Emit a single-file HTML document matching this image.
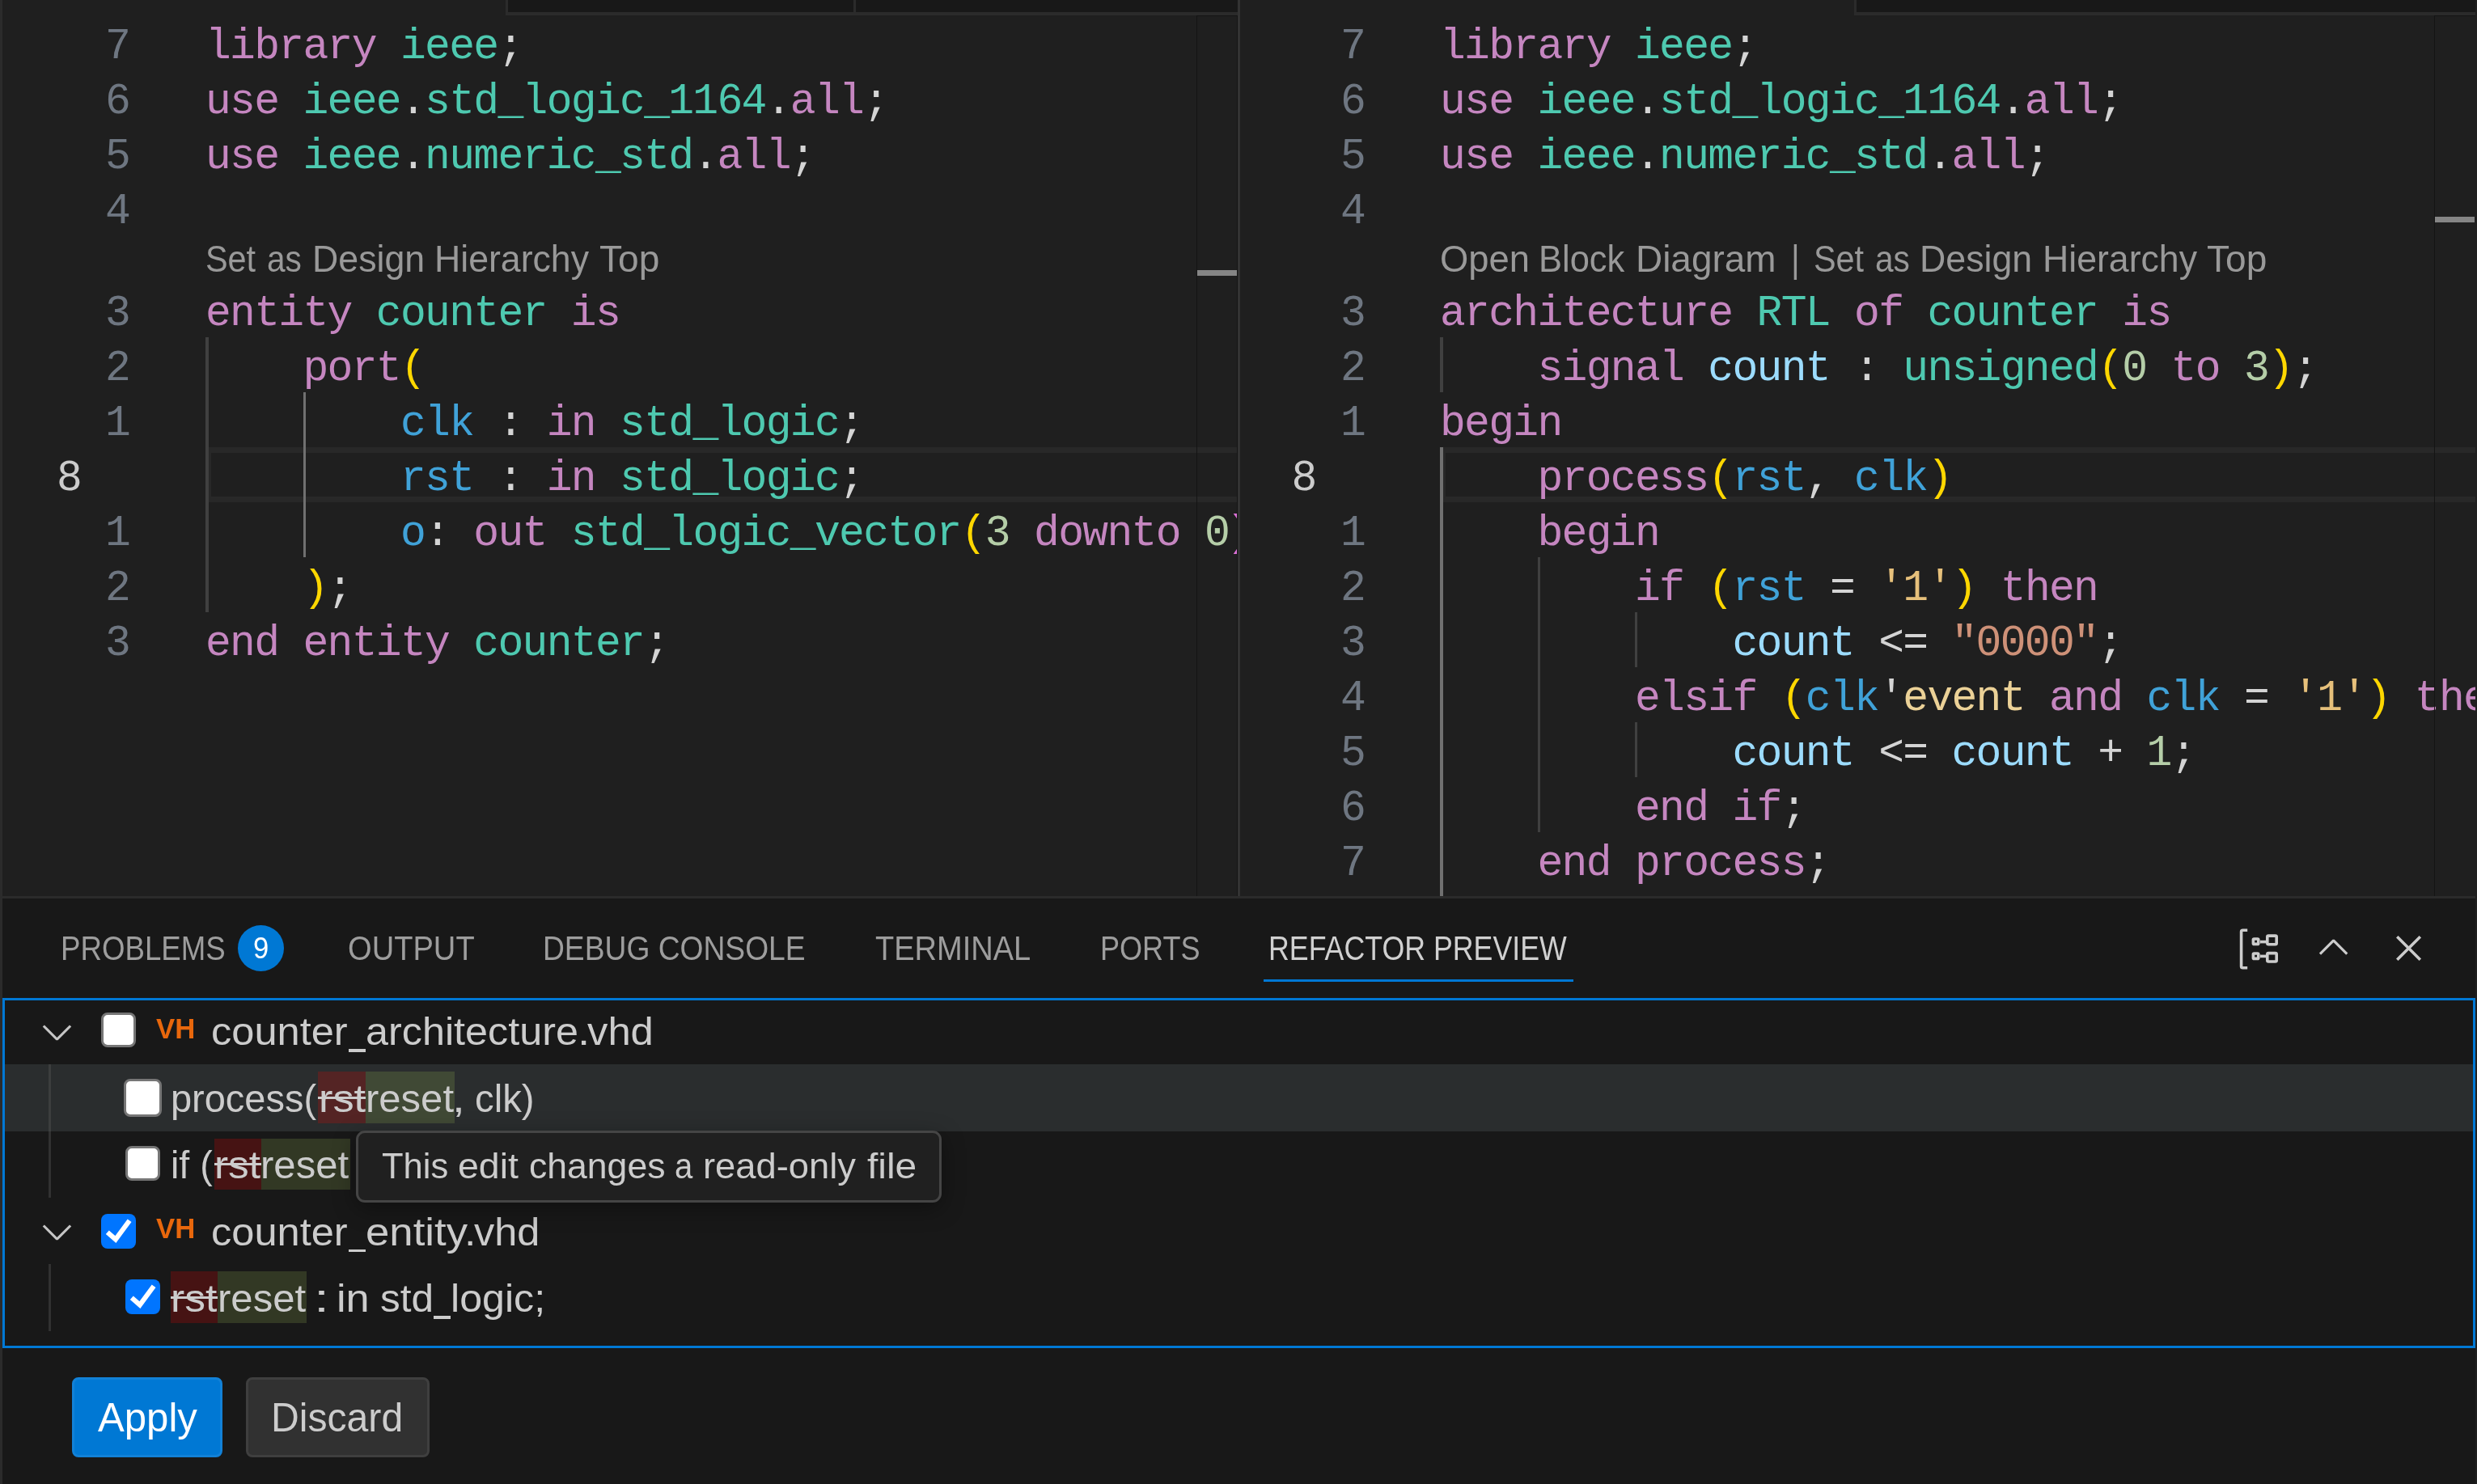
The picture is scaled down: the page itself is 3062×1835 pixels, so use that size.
<!DOCTYPE html>
<html><head><meta charset="utf-8"><title>VS Code - Refactor Preview</title>
<style>
*{box-sizing:border-box}
html,body{margin:0;padding:0}
body{width:3062px;height:1835px;background:#1f1f1f;overflow:hidden;position:relative;font-family:"Liberation Sans",sans-serif;color:#cccccc}
#root{position:absolute;left:0;top:0;width:3062px;height:1835px;overflow:hidden;will-change:transform}
.a{position:absolute}
.t{position:absolute;white-space:pre;line-height:1;transform-origin:0 50%;font-family:"Liberation Sans",sans-serif}
.ed{position:absolute;top:0;height:1108px;overflow:hidden}
.code{position:absolute;height:68px;line-height:78px;white-space:pre;font-family:"Liberation Mono",monospace;font-size:53px;letter-spacing:-1.6885px;color:#d4d4d4}
.ln{position:absolute;height:68px;line-height:78px;text-align:right;font-family:"Liberation Mono",monospace;font-size:53px;letter-spacing:-1.6885px;color:#6e7681}
.ln.cur{color:#cccccc}
.curline{position:absolute;height:68px;border:7px solid #282828;border-right:0}
.g{position:absolute;width:3.5px;background:#404040}
.g.ga{background:#707070}
.cb{position:absolute;background:#fff;border:3.3px solid #767676;border-radius:8px}
.cbc{position:absolute;background:#0075ff;border-radius:8px}
.red{position:absolute;background:rgba(255,0,0,0.2)}
.grn{position:absolute;background:rgba(155,185,85,0.2)}
.strike{position:absolute;height:3px;background:#cccccc}
.tg{position:absolute;width:3px;background:rgba(88,88,88,0.4)}

</style></head>
<body>
<div id="root">
<!-- editor area -->
<div class="a" style="left:0;top:0;width:3px;height:1835px;background:#2b2b2b"></div>

<!-- tab strip remnants -->
<div class="a" style="left:625px;top:0;width:905px;height:19px;background:#2b2b2b"></div>
<div class="a" style="left:628px;top:0;width:427px;height:15px;background:#181818"></div>
<div class="a" style="left:1058px;top:0;width:472px;height:15px;background:#181818"></div>
<div class="a" style="left:2292px;top:0;width:768px;height:19px;background:#2b2b2b"></div>
<div class="a" style="left:2295px;top:0;width:765px;height:15px;background:#181818"></div>

<!-- left editor -->
<div class="ed" style="left:0;width:1530px">
<div class="ln" style="left:3.0px;top:19.2px;width:157.0px">7</div>
<div class="code" style="left:254.0px;top:19.2px"><span style="color:#c586c0">library</span>&nbsp;<span style="color:#4ec9b0">ieee</span><span style="color:#d4d4d4">;</span></div>
<div class="ln" style="left:3.0px;top:87.2px;width:157.0px">6</div>
<div class="code" style="left:254.0px;top:87.2px"><span style="color:#c586c0">use</span>&nbsp;<span style="color:#4ec9b0">ieee</span><span style="color:#d4d4d4">.</span><span style="color:#4ec9b0">std_logic_1164</span><span style="color:#d4d4d4">.</span><span style="color:#c586c0">all</span><span style="color:#d4d4d4">;</span></div>
<div class="ln" style="left:3.0px;top:155.2px;width:157.0px">5</div>
<div class="code" style="left:254.0px;top:155.2px"><span style="color:#c586c0">use</span>&nbsp;<span style="color:#4ec9b0">ieee</span><span style="color:#d4d4d4">.</span><span style="color:#4ec9b0">numeric_std</span><span style="color:#d4d4d4">.</span><span style="color:#c586c0">all</span><span style="color:#d4d4d4">;</span></div>
<div class="ln" style="left:3.0px;top:223.2px;width:157.0px">4</div>
<span class="t" style="left:253.90px;top:297.25px;font-size:46px;color:#999999;transform:scaleX(0.8994);">Set</span>
<span class="t" style="left:329.82px;top:297.25px;font-size:46px;color:#999999;transform:scaleX(0.8823);">as</span>
<span class="t" style="left:385.59px;top:297.25px;font-size:46px;color:#999999;transform:scaleX(0.9716);">Design</span>
<span class="t" style="left:537.09px;top:297.25px;font-size:46px;color:#999999;transform:scaleX(0.9705);">Hierarchy</span>
<span class="t" style="left:740.50px;top:297.25px;font-size:46px;color:#999999;transform:scaleX(1.0016);">Top</span>
<div class="ln" style="left:3.0px;top:349.2px;width:157.0px">3</div>
<div class="code" style="left:254.0px;top:349.2px"><span style="color:#c586c0">entity</span>&nbsp;<span style="color:#4ec9b0">counter</span>&nbsp;<span style="color:#c586c0">is</span></div>
<div class="ln" style="left:3.0px;top:417.2px;width:157.0px">2</div>
<div class="code" style="left:254.0px;top:417.2px">&nbsp;&nbsp;&nbsp;&nbsp;<span style="color:#c586c0">port</span><span style="color:#ffd700">(</span></div>
<div class="ln" style="left:3.0px;top:485.2px;width:157.0px">1</div>
<div class="code" style="left:254.0px;top:485.2px">&nbsp;&nbsp;&nbsp;&nbsp;&nbsp;&nbsp;&nbsp;&nbsp;<span style="color:#40a2d8">clk</span>&nbsp;<span style="color:#d4d4d4">:</span>&nbsp;<span style="color:#c586c0">in</span>&nbsp;<span style="color:#4ec9b0">std_logic</span><span style="color:#d4d4d4">;</span></div>
<div class="curline" style="left:254.0px;top:553.2px;width:1276.0px"></div>
<div class="ln cur" style="left:3.0px;top:553.2px;width:97.0px">8</div>
<div class="code" style="left:254.0px;top:553.2px">&nbsp;&nbsp;&nbsp;&nbsp;&nbsp;&nbsp;&nbsp;&nbsp;<span style="color:#40a2d8">rst</span>&nbsp;<span style="color:#d4d4d4">:</span>&nbsp;<span style="color:#c586c0">in</span>&nbsp;<span style="color:#4ec9b0">std_logic</span><span style="color:#d4d4d4">;</span></div>
<div class="ln" style="left:3.0px;top:621.2px;width:157.0px">1</div>
<div class="code" style="left:254.0px;top:621.2px">&nbsp;&nbsp;&nbsp;&nbsp;&nbsp;&nbsp;&nbsp;&nbsp;<span style="color:#40a2d8">o</span><span style="color:#d4d4d4">:</span>&nbsp;<span style="color:#c586c0">out</span>&nbsp;<span style="color:#4ec9b0">std_logic_vector</span><span style="color:#ffd700">(</span><span style="color:#b5cea8">3</span>&nbsp;<span style="color:#c586c0">downto</span>&nbsp;<span style="color:#b5cea8">0</span><span style="color:#da70d6;margin-left:-3px">)</span><span style="color:#d4d4d4">;</span></div>
<div class="ln" style="left:3.0px;top:689.2px;width:157.0px">2</div>
<div class="code" style="left:254.0px;top:689.2px">&nbsp;&nbsp;&nbsp;&nbsp;<span style="color:#ffd700">)</span><span style="color:#d4d4d4">;</span></div>
<div class="ln" style="left:3.0px;top:757.2px;width:157.0px">3</div>
<div class="code" style="left:254.0px;top:757.2px"><span style="color:#c586c0">end</span>&nbsp;<span style="color:#c586c0">entity</span>&nbsp;<span style="color:#4ec9b0">counter</span><span style="color:#d4d4d4">;</span></div>
</div>
<!-- right editor -->
<div class="ed" style="left:0;width:3060px;clip-path:inset(0 0 0 1533px)">
<div class="ln" style="left:1533.0px;top:19.2px;width:154.0px">7</div>
<div class="code" style="left:1780.0px;top:19.2px"><span style="color:#c586c0">library</span>&nbsp;<span style="color:#4ec9b0">ieee</span><span style="color:#d4d4d4">;</span></div>
<div class="ln" style="left:1533.0px;top:87.2px;width:154.0px">6</div>
<div class="code" style="left:1780.0px;top:87.2px"><span style="color:#c586c0">use</span>&nbsp;<span style="color:#4ec9b0">ieee</span><span style="color:#d4d4d4">.</span><span style="color:#4ec9b0">std_logic_1164</span><span style="color:#d4d4d4">.</span><span style="color:#c586c0">all</span><span style="color:#d4d4d4">;</span></div>
<div class="ln" style="left:1533.0px;top:155.2px;width:154.0px">5</div>
<div class="code" style="left:1780.0px;top:155.2px"><span style="color:#c586c0">use</span>&nbsp;<span style="color:#4ec9b0">ieee</span><span style="color:#d4d4d4">.</span><span style="color:#4ec9b0">numeric_std</span><span style="color:#d4d4d4">.</span><span style="color:#c586c0">all</span><span style="color:#d4d4d4">;</span></div>
<div class="ln" style="left:1533.0px;top:223.2px;width:154.0px">4</div>
<span class="t" style="left:1779.83px;top:297.25px;font-size:46px;color:#999999;transform:scaleX(0.9866);">Open</span>
<span class="t" style="left:1902.37px;top:297.25px;font-size:46px;color:#999999;transform:scaleX(0.9449);">Block</span>
<span class="t" style="left:2022.01px;top:297.25px;font-size:46px;color:#999999;transform:scaleX(0.9982);">Diagram</span>
<span class="t" style="left:2213.60px;top:297.25px;font-size:46px;color:#999999;transform:scaleX(0.9000);">|</span>
<span class="t" style="left:2241.70px;top:297.25px;font-size:46px;color:#999999;transform:scaleX(0.8994);">Set</span>
<span class="t" style="left:2317.62px;top:297.25px;font-size:46px;color:#999999;transform:scaleX(0.8823);">as</span>
<span class="t" style="left:2373.39px;top:297.25px;font-size:46px;color:#999999;transform:scaleX(0.9716);">Design</span>
<span class="t" style="left:2524.89px;top:297.25px;font-size:46px;color:#999999;transform:scaleX(0.9705);">Hierarchy</span>
<span class="t" style="left:2728.30px;top:297.25px;font-size:46px;color:#999999;transform:scaleX(1.0016);">Top</span>
<div class="ln" style="left:1533.0px;top:349.2px;width:154.0px">3</div>
<div class="code" style="left:1780.0px;top:349.2px"><span style="color:#c586c0">architecture</span>&nbsp;<span style="color:#4ec9b0">RTL</span>&nbsp;<span style="color:#c586c0">of</span>&nbsp;<span style="color:#4ec9b0">counter</span>&nbsp;<span style="color:#c586c0">is</span></div>
<div class="ln" style="left:1533.0px;top:417.2px;width:154.0px">2</div>
<div class="code" style="left:1780.0px;top:417.2px">&nbsp;&nbsp;&nbsp;&nbsp;<span style="color:#c586c0">signal</span>&nbsp;<span style="color:#9cdcfe">count</span>&nbsp;<span style="color:#d4d4d4">:</span>&nbsp;<span style="color:#4ec9b0">unsigned</span><span style="color:#ffd700">(</span><span style="color:#b5cea8">0</span>&nbsp;<span style="color:#c586c0">to</span>&nbsp;<span style="color:#b5cea8">3</span><span style="color:#ffd700">)</span><span style="color:#d4d4d4">;</span></div>
<div class="ln" style="left:1533.0px;top:485.2px;width:154.0px">1</div>
<div class="code" style="left:1780.0px;top:485.2px"><span style="color:#c586c0">begin</span></div>
<div class="curline" style="left:1780.0px;top:553.2px;width:1280.0px"></div>
<div class="ln cur" style="left:1533.0px;top:553.2px;width:93.7px">8</div>
<div class="code" style="left:1780.0px;top:553.2px">&nbsp;&nbsp;&nbsp;&nbsp;<span style="color:#c586c0">process</span><span style="color:#ffd700">(</span><span style="color:#40a2d8">rst</span><span style="color:#d4d4d4">,</span>&nbsp;<span style="color:#40a2d8">clk</span><span style="color:#ffd700">)</span></div>
<div class="ln" style="left:1533.0px;top:621.2px;width:154.0px">1</div>
<div class="code" style="left:1780.0px;top:621.2px">&nbsp;&nbsp;&nbsp;&nbsp;<span style="color:#c586c0">begin</span></div>
<div class="ln" style="left:1533.0px;top:689.2px;width:154.0px">2</div>
<div class="code" style="left:1780.0px;top:689.2px">&nbsp;&nbsp;&nbsp;&nbsp;&nbsp;&nbsp;&nbsp;&nbsp;<span style="color:#c586c0">if</span>&nbsp;<span style="color:#ffd700">(</span><span style="color:#40a2d8">rst</span>&nbsp;<span style="color:#d4d4d4">=</span>&nbsp;<span style="color:#e6c07b">&#x27;1&#x27;</span><span style="color:#ffd700">)</span>&nbsp;<span style="color:#c586c0">then</span></div>
<div class="ln" style="left:1533.0px;top:757.2px;width:154.0px">3</div>
<div class="code" style="left:1780.0px;top:757.2px">&nbsp;&nbsp;&nbsp;&nbsp;&nbsp;&nbsp;&nbsp;&nbsp;&nbsp;&nbsp;&nbsp;&nbsp;<span style="color:#9cdcfe">count</span>&nbsp;<span style="color:#d4d4d4">&lt;=</span>&nbsp;<span style="color:#ce9178">&quot;0000&quot;</span><span style="color:#d4d4d4">;</span></div>
<div class="ln" style="left:1533.0px;top:825.2px;width:154.0px">4</div>
<div class="code" style="left:1780.0px;top:825.2px">&nbsp;&nbsp;&nbsp;&nbsp;&nbsp;&nbsp;&nbsp;&nbsp;<span style="color:#c586c0">elsif</span>&nbsp;<span style="color:#ffd700">(</span><span style="color:#40a2d8">clk</span><span style="color:#d4d4d4">&#x27;</span><span style="color:#ebd197">event</span>&nbsp;<span style="color:#c586c0">and</span>&nbsp;<span style="color:#40a2d8">clk</span>&nbsp;<span style="color:#d4d4d4">=</span>&nbsp;<span style="color:#e6c07b">&#x27;1&#x27;</span><span style="color:#ffd700">)</span>&nbsp;<span style="color:#c586c0">then</span></div>
<div class="ln" style="left:1533.0px;top:893.2px;width:154.0px">5</div>
<div class="code" style="left:1780.0px;top:893.2px">&nbsp;&nbsp;&nbsp;&nbsp;&nbsp;&nbsp;&nbsp;&nbsp;&nbsp;&nbsp;&nbsp;&nbsp;<span style="color:#9cdcfe">count</span>&nbsp;<span style="color:#d4d4d4">&lt;=</span>&nbsp;<span style="color:#9cdcfe">count</span>&nbsp;<span style="color:#d4d4d4">+</span>&nbsp;<span style="color:#b5cea8">1</span><span style="color:#d4d4d4">;</span></div>
<div class="ln" style="left:1533.0px;top:961.2px;width:154.0px">6</div>
<div class="code" style="left:1780.0px;top:961.2px">&nbsp;&nbsp;&nbsp;&nbsp;&nbsp;&nbsp;&nbsp;&nbsp;<span style="color:#c586c0">end</span>&nbsp;<span style="color:#c586c0">if</span><span style="color:#d4d4d4">;</span></div>
<div class="ln" style="left:1533.0px;top:1029.2px;width:154.0px">7</div>
<div class="code" style="left:1780.0px;top:1029.2px">&nbsp;&nbsp;&nbsp;&nbsp;<span style="color:#c586c0">end</span>&nbsp;<span style="color:#c586c0">process</span><span style="color:#d4d4d4">;</span></div>
</div>
<div class="ed" style="left:0;width:3062px">
<div class="g" style="left:254.0px;top:417.2px;height:340.0px"></div>
<div class="g ga" style="left:374.5px;top:485.2px;height:204.0px"></div>
<div class="g" style="left:1780.0px;top:417.2px;height:68.0px"></div>
<div class="g ga" style="left:1780.0px;top:553.2px;height:554.8px"></div>
<div class="g" style="left:1900.5px;top:689.2px;height:340.0px"></div>
<div class="g" style="left:2020.9px;top:757.2px;height:68.0px"></div>
<div class="g" style="left:2020.9px;top:893.2px;height:68.0px"></div>
</div>

<!-- minimap edges + overview ruler cursor marks -->
<div class="a" style="left:1479px;top:19px;width:51px;height:1089px;border:1.2px solid #141414;border-bottom:0"></div>
<div class="a" style="left:3009px;top:19px;width:51px;height:1089px;border:1.2px solid #141414;border-bottom:0;border-right:0"></div>
<div class="a" style="left:1480px;top:334px;width:49px;height:7px;background:#858585"></div>
<div class="a" style="left:3010px;top:268px;width:49px;height:7px;background:#858585"></div>

<!-- editor group separator -->
<div class="a" style="left:1530px;top:0;width:3px;height:1108px;background:#333333"></div>

<!-- panel -->
<div class="a" style="left:3px;top:1108px;width:3057px;height:727px;background:#181818"></div>
<div class="a" style="left:3px;top:1108px;width:3057px;height:3px;background:#2b2b2b"></div>
<span class="t" style="left:75.41px;top:1152.12px;font-size:42.5px;color:#9d9d9d;transform:scaleX(0.8627);">PROBLEMS</span>
<div class="a" style="left:294px;top:1144px;width:57px;height:57px;border-radius:50%;background:#0078d4"></div>
<span class="t" style="left:312.96px;top:1154.91px;font-size:36.6px;color:#ffffff;transform:scaleX(0.9444);">9</span>
<span class="t" style="left:429.91px;top:1152.12px;font-size:42.5px;color:#9d9d9d;transform:scaleX(0.8967);">OUTPUT</span>
<span class="t" style="left:671.27px;top:1152.12px;font-size:42.5px;color:#9d9d9d;transform:scaleX(0.8755);">DEBUG CONSOLE</span>
<span class="t" style="left:1082.30px;top:1152.12px;font-size:42.5px;color:#9d9d9d;transform:scaleX(0.8947);">TERMINAL</span>
<span class="t" style="left:1360.25px;top:1152.12px;font-size:42.5px;color:#9d9d9d;transform:scaleX(0.8486);">PORTS</span>
<span class="t" style="left:1568.18px;top:1152.12px;font-size:42.5px;color:#d0d0d0;transform:scaleX(0.8412);">REFACTOR PREVIEW</span>
<div class="a" style="left:1562px;top:1211px;width:383px;height:3px;background:#0078d4"></div>
<svg class="a" style="left:2760px;top:1140px" width="70" height="70" viewBox="2760 1140 70 70" fill="none" stroke="#cccccc" stroke-width="3.6"><path d="M2778.2 1150.2 H2772.5 Q2770.6 1150.2 2770.6 1152 V1195 Q2770.6 1196.8 2772.5 1196.8 H2778.2"/><rect x="2785.4" y="1161" width="6.4" height="6.4" rx="1"/><path d="M2794 1164.6 H2801"/><rect x="2802.8" y="1157.1" width="11.4" height="10.7" rx="1.5"/><rect x="2785.4" y="1179" width="6.4" height="6.4" rx="1"/><path d="M2794 1182.4 H2801"/><rect x="2802.8" y="1178.6" width="11.4" height="10.4" rx="1.5"/></svg>
<svg class="a" style="left:2855.72px;top:1143.85px" width="57.12" height="57.12" viewBox="0 0 16 16"><path fill="#cccccc" d="M8.024 5.928l-4.357 4.357-.62-.618L7.716 5h.618L13 9.667l-.619.618-4.357-4.357z"/></svg>
<svg class="a" style="left:2948.58px;top:1143.98px" width="57.12" height="57.12" viewBox="0 0 16 16"><path fill="#cccccc" d="M8 8.707l3.646 3.647.708-.707L8.707 8l3.647-3.646-.707-.708L8 7.293 4.354 3.646l-.707.708L7.293 8l-3.646 3.646.707.708L8 8.707z"/></svg>
<div class="a" style="left:3px;top:1316.2px;width:3057px;height:83.0px;background:#2a2d2e"></div>
<div class="tg" style="left:60px;top:1316.2px;height:164.8px"></div>
<div class="tg" style="left:60px;top:1563.4px;height:82.4px"></div>
<svg class="a" style="left:42.29px;top:1246.60px" width="57.12" height="57.12" viewBox="0 0 16 16"><path fill="#c5c5c5" d="M7.976 10.072l4.357-4.357.62.618L8.284 11h-.618L3 6.333l.619-.618 4.357 4.357z"/></svg>
<svg class="a" style="left:42.29px;top:1493.80px" width="57.12" height="57.12" viewBox="0 0 16 16"><path fill="#c5c5c5" d="M7.976 10.072l4.357-4.357.62.618L8.284 11h-.618L3 6.333l.619-.618 4.357 4.357z"/></svg>
<div class="cb" style="left:125.2px;top:1252.1px;width:43.0px;height:43.0px"></div>
<div class="cb" style="left:153.1px;top:1334.0px;width:46.6px;height:46.6px"></div>
<div class="cb" style="left:155.0px;top:1417.0px;width:43.0px;height:43.0px"></div>
<div class="cbc" style="left:125.0px;top:1500.6px;width:43.0px;height:43.0px"></div><svg class="a" style="left:125.0px;top:1500.6px" width="43.0" height="43.0" viewBox="0 0 43 43"><path d="M7.8 22.7 L17.9 31.6 L35.1 8.2" fill="none" stroke="#fff" stroke-width="6"/></svg>
<div class="cbc" style="left:155.0px;top:1582.0px;width:43.0px;height:43.0px"></div><svg class="a" style="left:155.0px;top:1582.0px" width="43.0" height="43.0" viewBox="0 0 43 43"><path d="M7.8 22.7 L17.9 31.6 L35.1 8.2" fill="none" stroke="#fff" stroke-width="6"/></svg>
<span class="t" style="left:192.90px;top:1254.96px;font-size:35.6px;color:#e8670c;transform:scaleX(0.9763);font-weight:700;">VH</span>
<span class="t" style="left:192.90px;top:1502.16px;font-size:35.6px;color:#e8670c;transform:scaleX(0.9763);font-weight:700;">VH</span>
<span class="t" style="left:260.69px;top:1252.36px;font-size:48px;color:#cccccc;transform:scaleX(1.0536);">counter</span>
<span class="t" style="left:452.00px;top:1252.36px;font-size:48px;color:#cccccc;transform:scaleX(1.0482);">architecture</span>
<span class="t" style="left:713.84px;top:1252.36px;font-size:48px;color:#cccccc;transform:scaleX(1.1400);">.</span>
<span class="t" style="left:726.40px;top:1252.36px;font-size:48px;color:#cccccc;transform:scaleX(1.0576);">vhd</span>
<div class="a" style="left:431.0px;top:1297.4px;width:21.0px;height:3.5px;background:#cccccc"></div>
<span class="t" style="left:260.69px;top:1499.56px;font-size:48px;color:#cccccc;transform:scaleX(1.0536);">counter</span>
<span class="t" style="left:451.70px;top:1499.56px;font-size:48px;color:#cccccc;transform:scaleX(1.0982);">entity</span>
<span class="t" style="left:574.28px;top:1499.56px;font-size:48px;color:#cccccc;transform:scaleX(1.0800);">.</span>
<span class="t" style="left:586.30px;top:1499.56px;font-size:48px;color:#cccccc;transform:scaleX(1.0509);">vhd</span>
<div class="a" style="left:431.2px;top:1544.6px;width:20.8px;height:3.5px;background:#cccccc"></div>
<div class="red" style="left:393.2px;top:1325.2px;width:58.7px;height:63.8px"></div>
<div class="grn" style="left:451.9px;top:1325.2px;width:110.0px;height:63.8px"></div>
<span class="t" style="left:210.77px;top:1334.76px;font-size:48px;color:#cccccc;transform:scaleX(0.9781);">process(</span>
<span class="t" style="left:393.53px;top:1334.76px;font-size:48px;color:#cccccc;transform:scaleX(1.0903);">rst</span>
<div class="strike" style="left:393.2px;top:1355.8px;width:58.7px"></div>
<span class="t" style="left:451.64px;top:1334.76px;font-size:48px;color:#cccccc;transform:scaleX(1.0215);">reset</span>
<span class="t" style="left:558.57px;top:1334.76px;font-size:48px;color:#cccccc;transform:scaleX(1.1833);">,</span>
<span class="t" style="left:586.63px;top:1334.76px;font-size:48px;color:#cccccc;transform:scaleX(0.9849);">clk)</span>
<div class="red" style="left:265.0px;top:1407.6px;width:57.7px;height:63.8px"></div>
<div class="grn" style="left:322.7px;top:1407.6px;width:110.1px;height:63.8px"></div>
<span class="t" style="left:210.89px;top:1417.16px;font-size:48px;color:#cccccc;transform:scaleX(0.9695);">if (</span>
<span class="t" style="left:265.39px;top:1417.16px;font-size:48px;color:#cccccc;transform:scaleX(1.0703);">rst</span>
<div class="strike" style="left:265.0px;top:1438.2px;width:57.7px"></div>
<span class="t" style="left:322.43px;top:1417.16px;font-size:48px;color:#cccccc;transform:scaleX(1.0225);">reset</span>
<div class="red" style="left:211.1px;top:1572.4px;width:57.8px;height:63.8px"></div>
<div class="grn" style="left:268.9px;top:1572.4px;width:110.1px;height:63.8px"></div>
<span class="t" style="left:211.48px;top:1581.96px;font-size:48px;color:#cccccc;transform:scaleX(1.0723);">rst</span>
<div class="strike" style="left:211.1px;top:1603.0px;width:57.8px"></div>
<span class="t" style="left:268.63px;top:1581.96px;font-size:48px;color:#cccccc;transform:scaleX(1.0225);">reset</span>
<span class="t" style="left:388.22px;top:1581.96px;font-size:48px;color:#cccccc;transform:scaleX(1.4200);">:</span>
<span class="t" style="left:415.53px;top:1581.96px;font-size:48px;color:#cccccc;transform:scaleX(1.0896);">in</span>
<span class="t" style="left:469.77px;top:1581.96px;font-size:48px;color:#cccccc;transform:scaleX(1.0309);">std</span>
<span class="t" style="left:556.76px;top:1581.96px;font-size:48px;color:#cccccc;transform:scaleX(1.0452);">logic;</span>
<div class="a" style="left:536.0px;top:1627.0px;width:21.3px;height:3.5px;background:#cccccc"></div>
<div class="a" style="left:3px;top:1234px;width:3057px;height:433px;border:3.3px solid #0078d4"></div>
<div class="a" style="left:440.4px;top:1398.4px;width:723.8px;height:88.2px;background:#202020;border:3.4px solid #454545;border-radius:11px;box-shadow:0 7px 28px rgba(0,0,0,0.36)"></div>
<span class="t" style="left:471.72px;top:1419.82px;font-size:44.5px;color:#cccccc;transform:scaleX(0.9778);">This</span>
<span class="t" style="left:565.75px;top:1419.82px;font-size:44.5px;color:#cccccc;transform:scaleX(1.0451);">edit</span>
<span class="t" style="left:654.00px;top:1419.82px;font-size:44.5px;color:#cccccc;transform:scaleX(1.0012);">changes</span>
<span class="t" style="left:833.70px;top:1419.82px;font-size:44.5px;color:#cccccc;transform:scaleX(0.9000);">a</span>
<span class="t" style="left:868.56px;top:1419.82px;font-size:44.5px;color:#cccccc;transform:scaleX(1.0186);">read-only</span>
<span class="t" style="left:1071.80px;top:1419.82px;font-size:44.5px;color:#cccccc;transform:scaleX(1.0773);">file</span>
<div class="a" style="left:89px;top:1702.7px;width:186px;height:99.3px;background:#0078d4;border:3.4px solid #1281d7;border-radius:8px"></div>
<span class="t" style="left:120.60px;top:1728.07px;font-size:50px;color:#ffffff;transform:scaleX(0.9826);">Apply</span>
<div class="a" style="left:304px;top:1702.7px;width:226.7px;height:99.3px;background:#313131;border:3.4px solid #3f3f3f;border-radius:8px"></div>
<span class="t" style="left:335.45px;top:1728.07px;font-size:50px;color:#cccccc;transform:scaleX(0.9627);">Discard</span>

</div>
</body></html>
